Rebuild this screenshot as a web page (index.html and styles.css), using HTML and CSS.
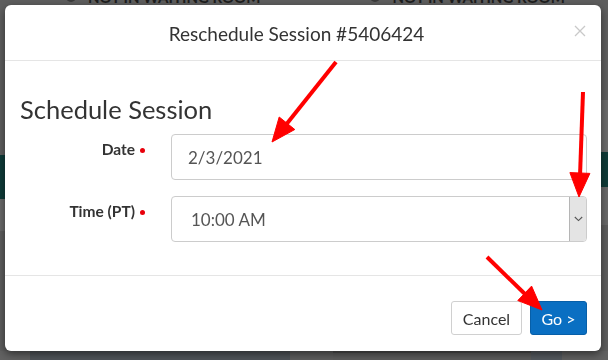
FILE: index.html
```html
<!DOCTYPE html>
<html lang="en">
<head>
<meta charset="utf-8">
<title>Reschedule Session</title>
<link rel="stylesheet" href="styles.css">
</head>
<body>
<div class="page">
  <div class="topbar">
    <div class="status"><span class="sdot"></span><span class="stext">NOT IN WAITING ROOM</span></div>
    <div class="status"><span class="sdot"></span><span class="stext">NOT IN WAITING ROOM</span></div>
  </div>
  <div class="main">
    <div class="edge edge-left">
      <div class="seg s-a"></div>
      <div class="seg s-teal"></div>
      <div class="seg s-light"></div>
    </div>
    <div class="edge edge-right">
      <div class="seg r-a"></div>
      <div class="seg r-b"></div>
      <div class="seg r-teal"></div>
      <div class="seg r-c"></div>
    </div>
  </div>
  <div class="bottombar">
    <div class="b b1"></div><div class="b b2"></div><div class="b b3"></div><div class="b b4"></div><div class="b b5"></div><div class="b b6"></div>
  </div>
</div>

<div class="modal">
  <div class="modal-header">
    <h4 class="modal-title">Reschedule Session #5406424</h4>
    <button class="close" type="button" aria-label="Close">
      <svg width="12" height="12" viewBox="0 0 12 12"><path d="M1 1L11 11M11 1L1 11" stroke="#c9c9c9" stroke-width="1.3" fill="none"/></svg>
    </button>
  </div>
  <div class="modal-body">
    <h2 class="section-title">Schedule Session</h2>
    <div class="form">
      <label class="label req">Date</label>
      <div class="input">2/3/2021</div>
      <label class="label req">Time (PT)</label>
      <div class="select">
        <span class="select-value">10:00 AM</span>
        <span class="select-btn">
          <svg width="9" height="6" viewBox="0 0 9 6"><path d="M0.8 1L4.5 4.6L8.2 1" stroke="#555" stroke-width="1.1" fill="none"/></svg>
        </span>
      </div>
    </div>
  </div>
  <div class="modal-footer">
    <button class="btn btn-default" type="button">Cancel</button>
    <button class="btn btn-primary" type="button">Go &gt;</button>
  </div>
</div>

<svg class="annotations" width="608" height="360" viewBox="0 0 608 360">
  <g fill="#ff0000" stroke="#ff0000">
    <line x1="336" y1="62" x2="285" y2="126" stroke-width="4"/>
    <polygon points="272,142 294.8,129.5 279.2,117" stroke-width="1"/>
    <line x1="583" y1="92" x2="580" y2="176" stroke-width="4"/>
    <polygon points="579,197 589.9,173.4 569.9,172.6" stroke-width="1"/>
    <line x1="487" y1="257" x2="527" y2="296" stroke-width="4"/>
    <polygon points="542,310 517.8,300.5 531.6,286.1" stroke-width="1"/>
  </g>
</svg>
</body>
</html>
```

FILE: styles.css
```css
* { box-sizing: border-box; }
html, body { margin: 0; padding: 0; }
body {
  width: 608px;
  height: 360px;
  overflow: hidden;
  font-family: Lato, "Open Sans", "Liberation Sans", sans-serif;
  color: #333;
  background: #5e5e5e;
}

/* background page (dimmed by backdrop) */
.page {
  height: 360px;
  display: flex;
  flex-direction: column;
  background: #5e5e5e;
}
.topbar {
  height: 5px;
  overflow: hidden;
  display: flex;
  align-items: flex-end;
  gap: 110px;
  padding-left: 66px;
}
.status {
  display: flex;
  align-items: center;
  gap: 12px;
  height: 16px;
  flex: none;
}
.sdot {
  width: 10px;
  height: 10px;
  border-radius: 50%;
  background: #3b3b3b;
}
.stext {
  font-weight: 700;
  font-size: 15px;
  line-height: 16px;
  color: #1d1d1d;
  white-space: nowrap;
}
.main {
  flex: 1;
  display: flex;
  justify-content: space-between;
}
.edge { display: flex; flex-direction: column; }
.edge-left { width: 5px; }
.edge-right { width: 7px; }
.s-a { height: 150px; background: #5f5f5f; }
.s-teal { height: 44px; background: #0f3c39; }
.s-light { height: 32px; background: #6a6a6a; }
.r-a { height: 95px; background: #5f5f5f; }
.r-b { height: 52px; background: #6d6d6d; }
.r-teal { height: 35px; background: #0f3c39; }
.r-c { height: 38px; background: #6a6a6a; }
.bottombar {
  height: 9px;
  display: flex;
}
.b { height: 100%; }
.b1 { width: 30px; background: #626262; }
.b2 { width: 260px; background: #50555a; }
.b3 { width: 43px; background: #5f5f5f; }
.b4 { width: 198px; background: #5d5d5d; border-top: 2px solid #4d4d4d; }
.b5 { width: 31px; background: #555a60; }
.b6 { flex: 1; background: #626262; }

/* modal */
.modal {
  position: fixed;
  left: 5px;
  top: 5px;
  width: 596px;
  height: 346px;
  background: #fff;
  border-radius: 6px;
  box-shadow: 0 3px 9px rgba(0, 0, 0, 0.5);
  display: flex;
  flex-direction: column;
}
.modal-header {
  height: 56px;
  border-bottom: 1px solid #e5e5e5;
  display: flex;
  align-items: center;
  padding: 0 14px 0 15px;
}
.modal-title {
  flex: 1;
  margin: 0;
  text-align: center;
  font-size: 19px;
  font-weight: 400;
  color: #333;
  padding-top: 1px;
  white-space: nowrap;
}
.close {
  border: 0;
  background: none;
  padding: 0;
  width: 14px;
  height: 14px;
  display: flex;
  align-items: center;
  justify-content: center;
  margin-top: -3px;
}
.modal-body {
  flex: 1;
  padding: 35px 14px 0 15px;
  border-bottom: 1px solid #e5e5e5;
}
.section-title {
  margin: 0 0 11px 0;
  font-size: 25.5px;
  line-height: 27px;
  font-weight: 400;
  color: #333;
  white-space: nowrap;
}
.form {
  display: grid;
  grid-template-columns: 136px 1fr;
  column-gap: 15px;
  row-gap: 16px;
}
.label {
  font-size: 15.5px;
  font-weight: 700;
  color: #333;
  text-align: right;
  padding-right: 11px;
  padding-top: 6px;
  white-space: nowrap;
}
.req::after {
  content: "";
  display: inline-block;
  width: 5px;
  height: 5px;
  border-radius: 50%;
  background: #e8000b;
  margin-left: 5px;
  vertical-align: 2px;
}
.input,
.select {
  height: 46px;
  border: 1px solid #ccc;
  border-radius: 4px;
  font-size: 17px;
  color: #555;
  display: flex;
  align-items: center;
}
.input { padding-left: 16px; }
.select { padding-left: 19px; overflow: hidden; }
.select-value { flex: 1; }
.select-btn {
  width: 17px;
  align-self: stretch;
  background: #e4e4e4;
  border-left: 1px solid #b5b5b5;
  display: flex;
  align-items: center;
  justify-content: center;
}
.modal-footer {
  height: 75px;
  display: flex;
  justify-content: flex-end;
  align-items: flex-start;
  gap: 8px;
  padding: 25px 14px 0 15px;
}
.btn {
  height: 34px;
  font-family: Lato, "Open Sans", "Liberation Sans", sans-serif;
  font-size: 16px;
  border-radius: 3px;
  padding: 0;
  white-space: nowrap;
  cursor: pointer;
}
.btn-default {
  width: 71px;
  background: #fff;
  border: 1px solid #d0d0d0;
  color: #333;
}
.btn-primary {
  width: 57px;
  background: #0a6fc2;
  border: 1px solid #075fa8;
  color: #fff;
}

.annotations {
  position: fixed;
  left: 0;
  top: 0;
  pointer-events: none;
}
```
